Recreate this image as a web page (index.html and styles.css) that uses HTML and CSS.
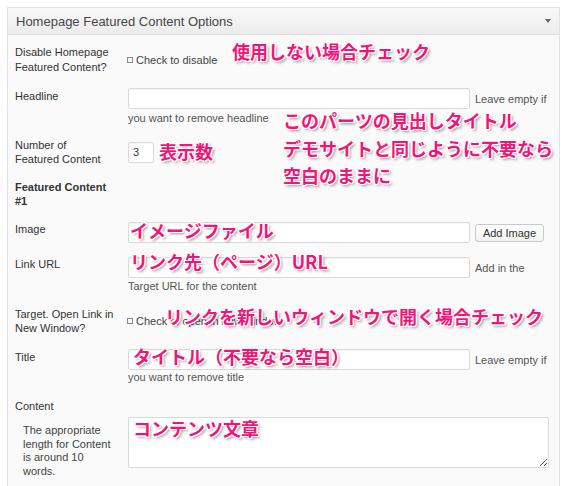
FILE: index.html
```html
<!DOCTYPE html>
<html lang="ja">
<head>
<meta charset="utf-8">
<title>Homepage Featured Content Options</title>
<link rel="stylesheet" href="styles.css">
</head>
<body>
<div class="panel">
  <div class="panel-head"><span class="title">Homepage Featured Content Options</span><span class="arrow"></span></div>
  <div class="panel-body">
    <div class="row r1">
      <div class="label">Disable Homepage<br>Featured Content?</div>
      <div class="field check"><span class="box"></span>Check to disable</div>
    </div>
    <div class="row r2">
      <div class="label">Headline</div>
      <div class="field">
        <div class="line"><input class="text" type="text"><span class="side">Leave empty if</span></div>
        <div class="desc d2">you want to remove headline</div>
      </div>
    </div>
    <div class="row r3">
      <div class="label">Number of<br>Featured Content</div>
      <div class="field"><input class="text small" type="text" value="3"></div>
    </div>
    <div class="row r4">
      <div class="label bold">Featured Content<br>#1</div>
    </div>
    <div class="row r5">
      <div class="label">Image</div>
      <div class="field">
        <div class="line"><input class="text" type="text"><button class="btn" type="button">Add Image</button></div>
      </div>
    </div>
    <div class="row r6">
      <div class="label">Link URL</div>
      <div class="field">
        <div class="line"><input class="text" type="text"><span class="side">Add in the</span></div>
        <div class="desc d6">Target URL for the content</div>
      </div>
    </div>
    <div class="row r7">
      <div class="label">Target. Open Link in<br>New Window?</div>
      <div class="field check"><span class="box"></span>Check to open in new window</div>
    </div>
    <div class="row r8">
      <div class="label">Title</div>
      <div class="field">
        <div class="line"><input class="text" type="text"><span class="side">Leave empty if</span></div>
        <div class="desc d8">you want to remove title</div>
      </div>
    </div>
    <div class="row r9">
      <div class="label">Content</div>
    </div>
    <div class="row r10">
      <div class="cdesc">The appropriate<br>length for Content<br>is around 10<br>words.</div>
      <div class="field"><textarea class="area"></textarea></div>
    </div>
  </div>
</div>

<div class="note n1">使用しない場合チェック</div>
<div class="note n2">このパーツの見出しタイトル<br>デモサイトと同じように不要なら<br>空白のままに</div>
<div class="note n3">表示数</div>
<div class="note n4">イメージファイル</div>
<div class="note n5">リンク先（ページ）URL</div>
<div class="note n6">リンクを新しいウィンドウで開く場合チェック</div>
<div class="note n7">タイトル（不要なら空白）</div>
<div class="note n8">コンテンツ文章</div>
</body>
</html>
```
FILE: styles.css
```css
html, body {
  margin: 0;
  padding: 0;
}
body {
  position: relative;
  background: #ffffff;
  font-family: "Liberation Sans", Arial, sans-serif;
  font-size: 11px;
  color: #333333;
  height: 486px;
  overflow: hidden;
}
.panel {
  margin: 7px 0 0 7px;
  width: 553px;
  box-sizing: border-box;
  border: 1px solid #e2e2e2;
  background: #fafafa;
}
.panel-head {
  height: 26px;
  border-bottom: 1px solid #dfdfdf;
  background: linear-gradient(#f8f8f8, #ececec);
  display: flex;
  align-items: center;
  justify-content: space-between;
  padding: 0 8px;
  font-size: 13px;
  color: #464646;
}
.arrow {
  width: 0;
  height: 0;
  border-left: 3px solid transparent;
  border-right: 3px solid transparent;
  border-top: 4px solid #666666;
}
.panel-body {
  padding: 10px 7px 40px 7px;
}
.row {
  display: flex;
}
.label {
  width: 113px;
  flex: none;
}
.bold {
  font-weight: bold;
}
.field {
  flex: 1;
  min-width: 0;
}
.check {
  display: flex;
  align-items: center;
  color: #444444;
}
.box {
  width: 6px;
  height: 6px;
  box-sizing: border-box;
  border: 1px solid #8a8a8a;
  margin: 0 3px 0 -1px;
  background: #fff;
}
.line {
  display: flex;
  align-items: center;
}
.text {
  box-sizing: border-box;
  width: 342px;
  height: 21px;
  margin: 0;
  padding: 0 4px;
  border: 1px solid #dadada;
  border-radius: 2px;
  background: #ffffff;
  box-shadow: inset 0 1px 1px rgba(0, 0, 0, 0.04);
  font-family: "Liberation Sans", Arial, sans-serif;
  font-size: 11px;
  color: #333333;
  outline: none;
}
.small {
  width: 26px;
}
.side {
  margin-left: 5px;
  color: #555555;
  white-space: nowrap;
}
.btn {
  margin: 0 0 0 5px;
  width: 69px;
  height: 18px;
  padding: 0;
  border: 1px solid #c8c8c8;
  border-radius: 3px;
  background: linear-gradient(#ffffff, #f2f2f2);
  font-family: "Liberation Sans", Arial, sans-serif;
  font-size: 11px;
  color: #333333;
}
.desc {
  line-height: 14px;
  color: #555555;
}
.r1 { align-items: center; }
.r1 .label { line-height: 15px; }
.r2 { margin-top: 13px; }
.r2 .label { line-height: 16px; }
.d2 { margin-top: 2px; }
.r3 { margin-top: 13px; align-items: center; }
.r3 .label { line-height: 14px; }
.r4 { margin-top: 14px; }
.r4 .label { line-height: 14px; }
.r5 { margin-top: 14px; }
.r5 .label { line-height: 15px; }
.r6 { margin-top: 14px; }
.r6 .label { line-height: 14px; }
.d6 { margin-top: 1px; }
.r7 { margin-top: 14px; align-items: center; }
.r7 .label { line-height: 14px; }
.r8 { margin-top: 14px; }
.r8 .label { line-height: 16px; }
.r9 { margin-top: 15px; }
.r9 .label { line-height: 14px; }
.r10 { margin-top: 4px; }
.cdesc {
  width: 113px;
  flex: none;
  box-sizing: border-box;
  padding: 7px 4px 0 8px;
  line-height: 13.7px;
  color: #444444;
  white-space: nowrap;
}
.area {
  display: block;
  box-sizing: border-box;
  width: 421px;
  height: 51px;
  margin: 0;
  border: 1px solid #dadada;
  border-radius: 2px;
  background: #ffffff;
  outline: none;
}

.note {
  position: absolute;
  font-family: "Noto Sans CJK JP", sans-serif;
  font-weight: 700;
  font-size: 18px;
  line-height: 18px;
  color: #ef1679;
  white-space: nowrap;
  text-shadow: 1px 0 0 #fff, -1px 0 0 #fff, 0 1px 0 #fff, 0 -1px 0 #fff,
    1px 1px 0 #fff, -1px -1px 0 #fff, 1px -1px 0 #fff, -1px 1px 0 #fff,
    2px 2px 3px rgba(0, 0, 0, 0.45);
}
.n1 { left: 232px; top: 42px; }
.n2 { left: 283px; top: 107px; line-height: 27.5px; }
.n3 { left: 159px; top: 142px; }
.n4 { left: 130px; top: 221px; }
.n5 { left: 130px; top: 252px; }
.n6 { left: 165px; top: 307px; }
.n7 { left: 133px; top: 347px; }
.n8 { left: 133px; top: 419px; }
```
